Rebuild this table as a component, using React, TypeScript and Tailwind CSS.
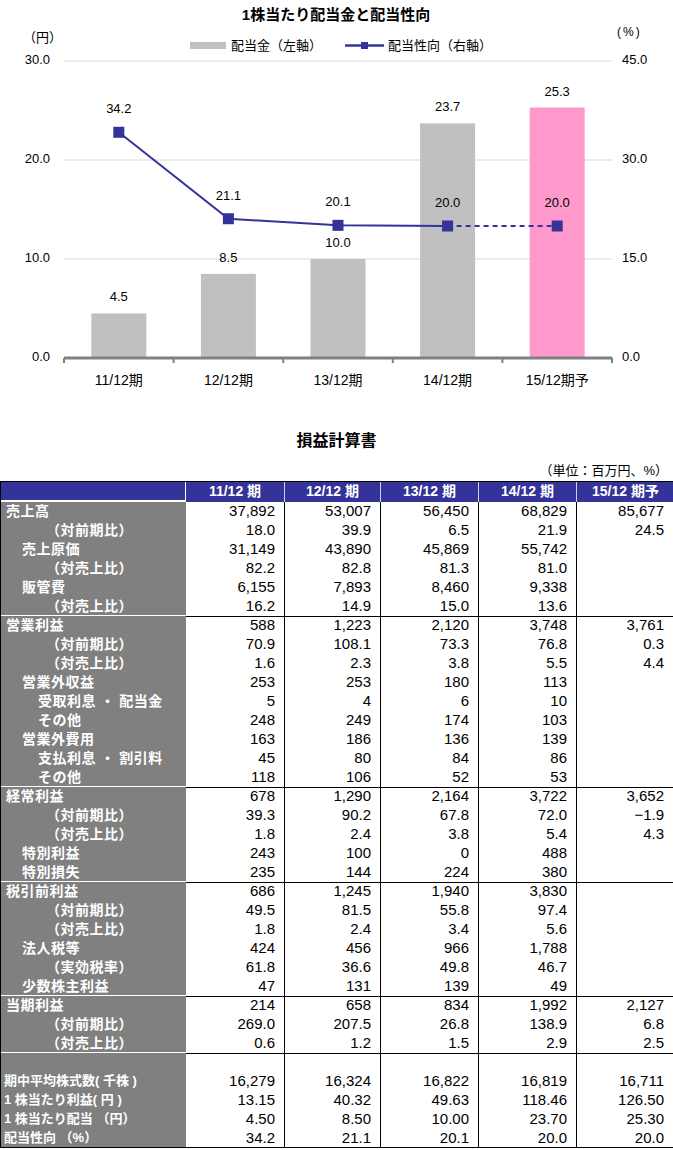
import React from 'react';

const cats = ['11/12期', '12/12期', '13/12期', '14/12期', '15/12期予'];
const dividend = [4.5, 8.5, 10.0, 23.7, 25.3];
const payout = [34.2, 21.1, 20.1, 20.0, 20.0];

const X0 = 64;
const CW = 109.6;
const BASE = 358;
const yL = (v: number) => BASE - v * 9.9;
const yR = (v: number) => BASE - v * 6.6;
const cx = (i: number) => X0 + CW * i + CW / 2;

function DividendChart() {
  const pts = payout.map((v, i) => [cx(i), yR(v)]);
  const solid = pts.slice(0, 4).map((p) => p.join(',')).join(' ');
  return (
    <svg width={673} height={400} className="block" fontFamily="'Liberation Sans', 'Noto Sans CJK JP', sans-serif">
      <text x={336} y={20} textAnchor="middle" fontSize={15} fontWeight={700}>
        1株当たり配当金と配当性向
      </text>
      <text x={23} y={42} fontSize={13}>（円）</text>
      <text x={617} y={36} fontSize={12} letterSpacing={2}>(%)</text>

      {/* legend */}
      <rect x={190} y={42} width={36} height={7} fill="#c0c0c0" />
      <text x={231} y={50} fontSize={13}>配当金（左軸）</text>
      <line x1={345} y1={45.5} x2={384} y2={45.5} stroke="#333399" strokeWidth={2.5} />
      <rect x={361} y={42} width={7} height={7} fill="#333399" />
      <text x={388} y={50} fontSize={13}>配当性向（右軸）</text>

      {/* grid */}
      {[30, 20, 10].map((v) => (
        <line key={v} x1={X0} x2={X0 + CW * 5} y1={yL(v)} y2={yL(v)} stroke="#d9d9d9" strokeWidth={1} />
      ))}
      {[30, 20, 10, 0].map((v) => (
        <text key={'l' + v} x={50} y={yL(v)} dominantBaseline="middle" textAnchor="end" fontSize={13}>
          {v.toFixed(1)}
        </text>
      ))}
      {[45, 30, 15, 0].map((v) => (
        <text key={'r' + v} x={622} y={yR(v)} dominantBaseline="middle" fontSize={13}>
          {v.toFixed(1)}
        </text>
      ))}

      {/* bars */}
      {dividend.map((v, i) => (
        <g key={'b' + i}>
          <rect x={cx(i) - 27.5} y={yL(v)} width={55} height={BASE - yL(v)} fill={i === 4 ? '#ff99cc' : '#c0c0c0'} />
          <text x={cx(i)} y={yL(v) - 12} textAnchor="middle" fontSize={13}>
            {v.toFixed(1)}
          </text>
        </g>
      ))}

      {/* axis */}
      <line x1={X0} x2={X0 + CW * 5} y1={BASE} y2={BASE} stroke="#808080" strokeWidth={3} />
      {[0, 1, 2, 3, 4, 5].map((i) => (
        <line key={'t' + i} x1={X0 + CW * i} x2={X0 + CW * i} y1={BASE} y2={BASE + 5} stroke="#808080" strokeWidth={2} />
      ))}
      {cats.map((c, i) => (
        <text key={c} x={cx(i)} y={385} textAnchor="middle" fontSize={14}>
          {c}
        </text>
      ))}

      {/* payout line */}
      <polyline points={solid} fill="none" stroke="#333399" strokeWidth={2} />
      <line x1={pts[3][0]} y1={pts[3][1]} x2={pts[4][0]} y2={pts[4][1]} stroke="#333399" strokeWidth={2} strokeDasharray="5 4" />
      {pts.map(([x, y], i) => (
        <g key={'m' + i}>
          <rect x={x - 5.5} y={y - 5.5} width={11} height={11} fill="#333399" />
          <text x={x} y={y - 19} textAnchor="middle" fontSize={13}>
            {payout[i].toFixed(1)}
          </text>
        </g>
      ))}
    </svg>
  );
}

type Row = { label: string; lv: 0 | 1 | 2 | 3 | 4; v: string[] };

const sections: Row[][] = [
  [
    { label: '売上高', lv: 0, v: ['37,892', '53,007', '56,450', '68,829', '85,677'] },
    { label: '（対前期比）', lv: 3, v: ['18.0', '39.9', '6.5', '21.9', '24.5'] },
    { label: '売上原価', lv: 1, v: ['31,149', '43,890', '45,869', '55,742', ''] },
    { label: '（対売上比）', lv: 3, v: ['82.2', '82.8', '81.3', '81.0', ''] },
    { label: '販管費', lv: 1, v: ['6,155', '7,893', '8,460', '9,338', ''] },
    { label: '（対売上比）', lv: 3, v: ['16.2', '14.9', '15.0', '13.6', ''] },
  ],
  [
    { label: '営業利益', lv: 0, v: ['588', '1,223', '2,120', '3,748', '3,761'] },
    { label: '（対前期比）', lv: 3, v: ['70.9', '108.1', '73.3', '76.8', '0.3'] },
    { label: '（対売上比）', lv: 3, v: ['1.6', '2.3', '3.8', '5.5', '4.4'] },
    { label: '営業外収益', lv: 1, v: ['253', '253', '180', '113', ''] },
    { label: '受取利息 ・ 配当金', lv: 2, v: ['5', '4', '6', '10', ''] },
    { label: 'その他', lv: 2, v: ['248', '249', '174', '103', ''] },
    { label: '営業外費用', lv: 1, v: ['163', '186', '136', '139', ''] },
    { label: '支払利息 ・ 割引料', lv: 2, v: ['45', '80', '84', '86', ''] },
    { label: 'その他', lv: 2, v: ['118', '106', '52', '53', ''] },
  ],
  [
    { label: '経常利益', lv: 0, v: ['678', '1,290', '2,164', '3,722', '3,652'] },
    { label: '（対前期比）', lv: 3, v: ['39.3', '90.2', '67.8', '72.0', '−1.9'] },
    { label: '（対売上比）', lv: 3, v: ['1.8', '2.4', '3.8', '5.4', '4.3'] },
    { label: '特別利益', lv: 1, v: ['243', '100', '0', '488', ''] },
    { label: '特別損失', lv: 1, v: ['235', '144', '224', '380', ''] },
  ],
  [
    { label: '税引前利益', lv: 0, v: ['686', '1,245', '1,940', '3,830', ''] },
    { label: '（対前期比）', lv: 3, v: ['49.5', '81.5', '55.8', '97.4', ''] },
    { label: '（対売上比）', lv: 3, v: ['1.8', '2.4', '3.4', '5.6', ''] },
    { label: '法人税等', lv: 1, v: ['424', '456', '966', '1,788', ''] },
    { label: '（実効税率）', lv: 3, v: ['61.8', '36.6', '49.8', '46.7', ''] },
    { label: '少数株主利益', lv: 1, v: ['47', '131', '139', '49', ''] },
  ],
  [
    { label: '当期利益', lv: 0, v: ['214', '658', '834', '1,992', '2,127'] },
    { label: '（対前期比）', lv: 3, v: ['269.0', '207.5', '26.8', '138.9', '6.8'] },
    { label: '（対売上比）', lv: 3, v: ['0.6', '1.2', '1.5', '2.9', '2.5'] },
  ],
  [
    { label: '', lv: 4, v: ['', '', '', '', ''] },
    { label: '期中平均株式数( 千株 )', lv: 4, v: ['16,279', '16,324', '16,822', '16,819', '16,711'] },
    { label: '1 株当たり利益( 円 )', lv: 4, v: ['13.15', '40.32', '49.63', '118.46', '126.50'] },
    { label: '1 株当たり配当 （円）', lv: 4, v: ['4.50', '8.50', '10.00', '23.70', '25.30'] },
    { label: '配当性向 （%）', lv: 4, v: ['34.2', '21.1', '20.1', '20.0', '20.0'] },
  ],
];

const indent = {
  0: 'pl-[5px] text-[14px] tracking-[0.5px]',
  1: 'pl-[21px] text-[14px] tracking-[0.5px]',
  2: 'pl-[37px] text-[14px] tracking-[0.5px]',
  3: 'pl-[45px] text-[14px] tracking-[0.5px]',
  4: 'pl-[3px] text-[13px]',
};

const grid = 'grid grid-cols-[185px_99px_96px_98px_98px_97px]';

function IncomeTable() {
  const heads = ['11/12 期', '12/12 期', '13/12 期', '14/12 期', '15/12 期予'];
  return (
    <div className="border-l border-black">
      <div className={`${grid} h-[21px] bg-[#333399] border-t border-black text-white font-bold text-[14px] leading-[19px]`}>
        <div className="border-r border-white border-b-2" />
        {heads.map((h, i) => (
          <div key={h} className={`text-center ${i < 4 ? 'border-r border-[#d0d0e0]' : ''}`}>
            {h}
          </div>
        ))}
      </div>
      {sections.map((rows, si) =>
        rows.map((r, ri) => {
          const last = ri === rows.length - 1;
          return (
            <div key={si + '-' + ri} className={`${grid} h-[19px] leading-[18px]`}>
              <div
                className={`bg-[#808080] text-white font-bold whitespace-nowrap ${indent[r.lv]} ${
                  last && si < sections.length - 1 ? 'border-b-2 border-white' : ''
                } ${last && si === sections.length - 1 ? 'border-b border-black' : ''}`}
              >
                {r.label}
              </div>
              {r.v.map((v, ci) => (
                <div
                  key={ci}
                  className={`text-right pr-[9px] text-[15px] text-black border-r border-black ${last ? 'border-b' : ''}`}
                >
                  {v}
                </div>
              ))}
            </div>
          );
        })
      )}
    </div>
  );
}

export default function App() {
  return (
    <div className="w-[673px] bg-white font-['Liberation_Sans','Noto_Sans_CJK_JP',sans-serif] text-black">
      <DividendChart />
      <div className="mt-[29px] h-[24px] leading-[24px] text-center font-bold text-[16px]">損益計算書</div>
      <div className="mt-[8px] h-[20px] leading-[20px] text-right pr-[5px] text-[13px]">（単位：百万円、%）</div>
      <IncomeTable />
    </div>
  );
}
